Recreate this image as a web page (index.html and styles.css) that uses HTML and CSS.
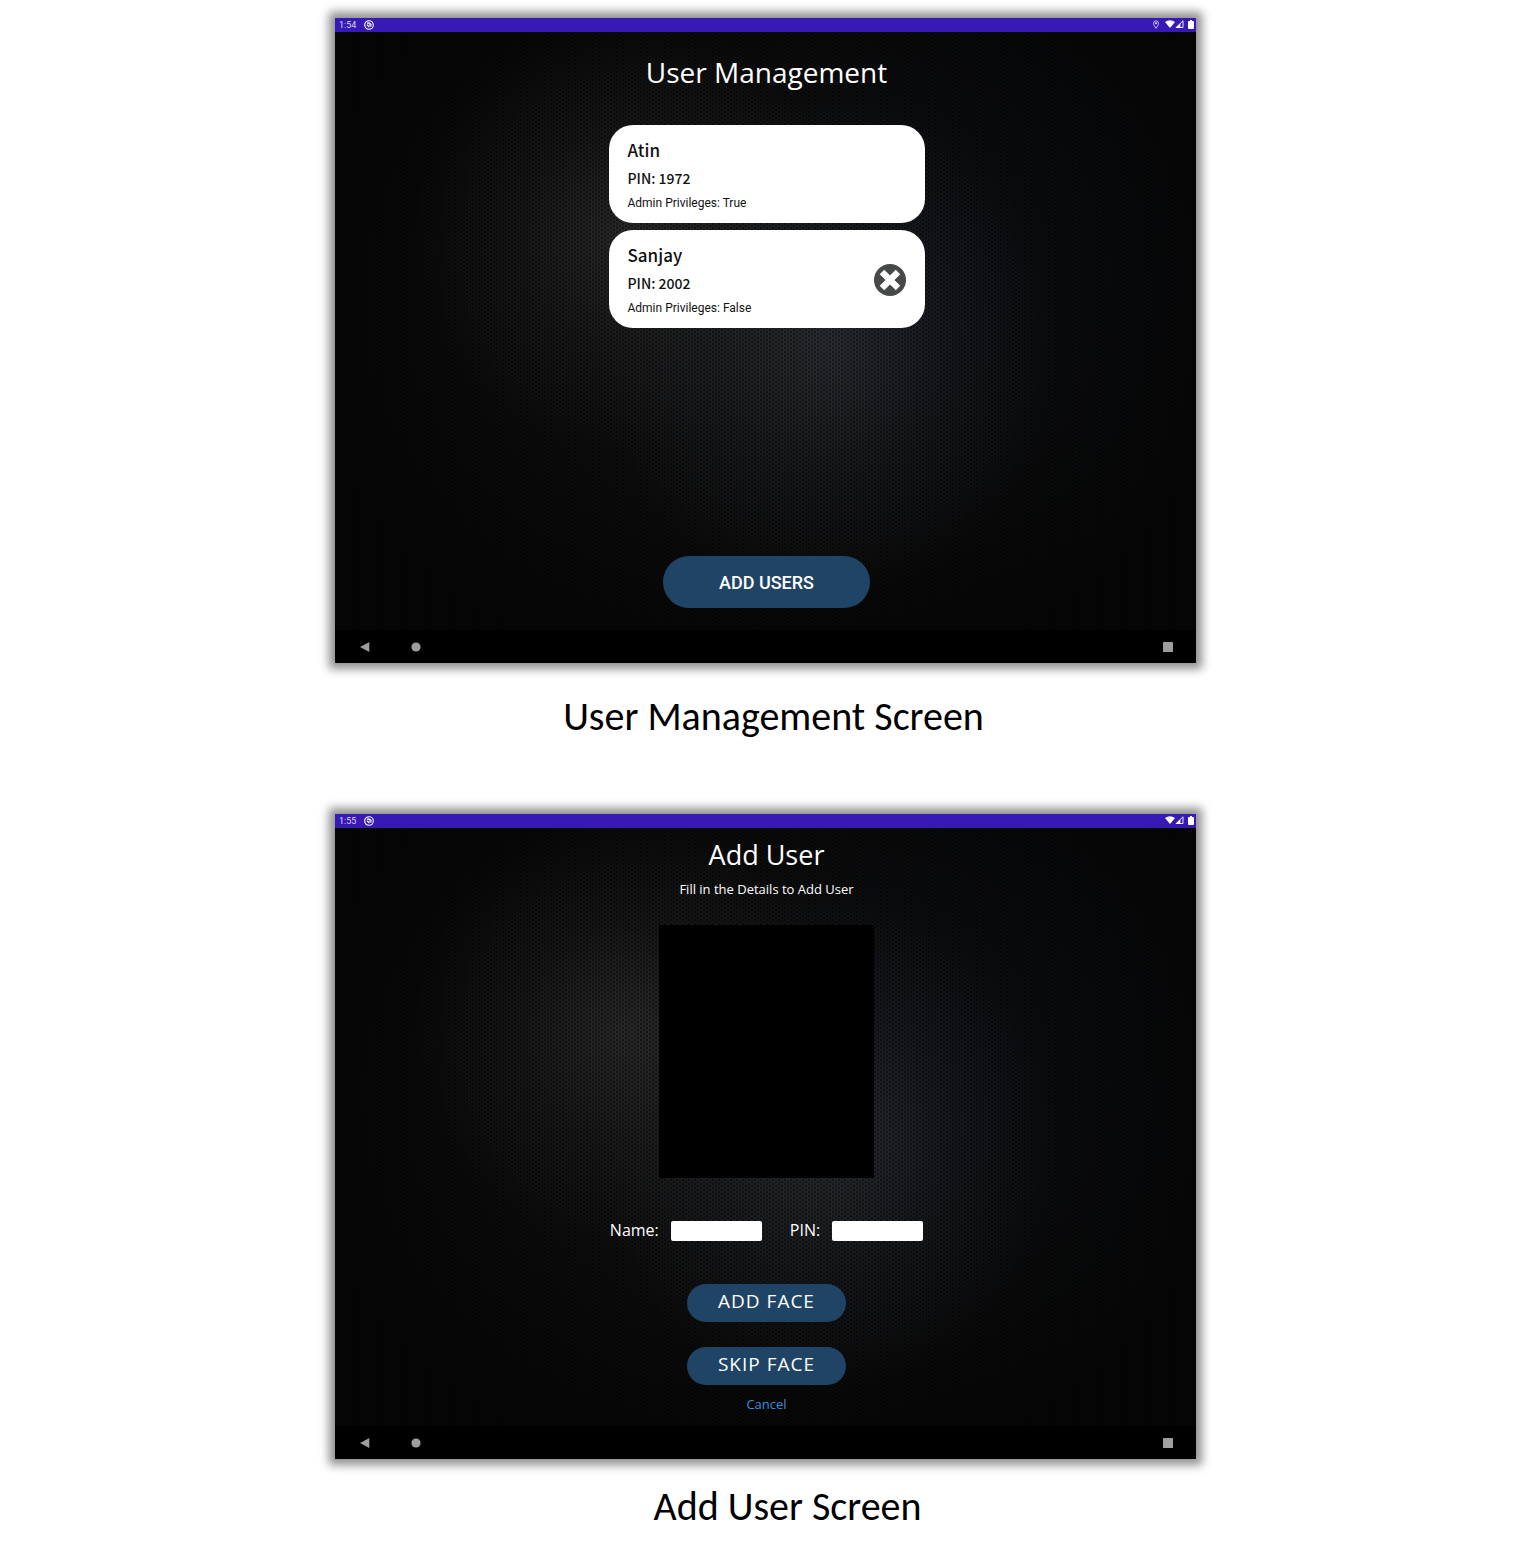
FILE: index.html
```html
<!DOCTYPE html>
<html lang="en">
<head>
<meta charset="utf-8">
<title>User Management</title>
<link rel="stylesheet" href="styles.css">
</head>
<body>
<svg class="sprite" aria-hidden="true">
  <symbol id="app" viewBox="0 0 10 10"><circle cx="5" cy="5" r="4.300" fill="none" stroke="#fff" stroke-width="1.100"/><path d="M3 3.200 5 2.800 7 4.200 6.800 6.800M2.800 4.600 5.400 7.200M4.800 4.800 6 5.200" fill="none" stroke="#fff" stroke-width="1.200"/></symbol>
  <symbol id="pin" viewBox="0 0 8 10"><path d="M4 9.200C2.400 7 1.300 5.400 1.300 3.600a2.700 2.700 0 0 1 5.400 0C6.700 5.400 5.600 7 4 9.200Z" fill="none" stroke="#fff" stroke-width=".8"/><circle cx="4" cy="3.600" r="1" fill="#fff"/></symbol>
  <symbol id="wifi" viewBox="0 0 10 8"><path d="M0 2Q5-1.500 10 2L5 8Z" fill="#fff"/></symbol>
  <symbol id="signal" viewBox="0 0 9 8"><path d="M1.200 7.500H8V.8Z" fill="none" stroke="#fff" stroke-width=".9"/><path d="M.4 8H5.400V3.200Z" fill="#fff"/></symbol>
  <symbol id="battery" viewBox="0 0 6 9"><path d="M2 0h2v1h1q1 0 1 1v6q0 1-1 1H1q-1 0-1-1V2q0-1 1-1h1Z" fill="#fff"/></symbol>
  <symbol id="back" viewBox="0 0 10 10"><path d="M9.300 0V10L0 5Z" fill="#9e9e9e"/></symbol>
  <symbol id="home" viewBox="0 0 10 10"><circle cx="5" cy="5" r="4.600" fill="#9e9e9e"/></symbol>
  <symbol id="recent" viewBox="0 0 10 10"><rect width="10" height="10" rx=".6" fill="#9e9e9e"/></symbol>
</svg>
<main class="page">
  <figure class="figure">
    <section class="screen">
      <header class="status">
        <span>1:54</span><svg class="i-app"><use href="#app"/></svg>
        <div class="status-icons"><svg class="i-pin"><use href="#pin"/></svg><svg class="i-wifi"><use href="#wifi"/></svg><svg class="i-signal"><use href="#signal"/></svg><svg class="i-battery"><use href="#battery"/></svg></div>
      </header>
      <div class="content manage">
        <h1 class="title">User Management</h1>
        <ul class="users">
          <li class="card">
            <div><h2 class="name">Atin</h2><p class="pin">PIN: 1972</p><p class="role">Admin Privileges: True</p></div>
          </li>
          <li class="card">
            <div><h2 class="name">Sanjay</h2><p class="pin">PIN: 2002</p><p class="role">Admin Privileges: False</p></div>
            <button class="remove" aria-label="Remove Sanjay"><svg viewBox="0 0 32 32"><circle cx="16" cy="16" r="16" fill="#474949"/><path d="m10 12 10 14 6-3-5-9Z" fill="#333535"/><path d="m8 8 16 16M24 8 8 24" stroke="#fff" stroke-width="6.400"/></svg></button>
          </li>
        </ul>
        <button class="add-users">ADD USERS</button>
      </div>
      <nav class="nav"><button aria-label="Back"><svg><use href="#back"/></svg></button><button aria-label="Home"><svg><use href="#home"/></svg></button><button aria-label="Recent apps"><svg><use href="#recent"/></svg></button></nav>
    </section>
    <figcaption class="caption caption-manage">User Management Screen</figcaption>
  </figure>
  <figure class="figure">
    <section class="screen">
      <header class="status">
        <span>1:55</span><svg class="i-app"><use href="#app"/></svg>
        <div class="status-icons"><svg class="i-wifi"><use href="#wifi"/></svg><svg class="i-signal"><use href="#signal"/></svg><svg class="i-battery"><use href="#battery"/></svg></div>
      </header>
      <form class="content add">
        <h1 class="title">Add User</h1>
        <p class="hint">Fill in the Details to Add User</p>
        <div class="camera"></div>
        <div class="fields">
          <label for="name">Name:</label><input id="name" type="text">
          <label for="pin-code">PIN:</label><input id="pin-code" type="text">
        </div>
        <button class="face" type="button">ADD FACE</button>
        <button class="face" type="button">SKIP FACE</button>
        <a class="cancel" href="#">Cancel</a>
      </form>
      <nav class="nav"><button aria-label="Back"><svg><use href="#back"/></svg></button><button aria-label="Home"><svg><use href="#home"/></svg></button><button aria-label="Recent apps"><svg><use href="#recent"/></svg></button></nav>
    </section>
    <figcaption class="caption caption-add">Add User Screen</figcaption>
  </figure>
</main>
</body>
</html>
```
FILE: styles.css
```css
* { box-sizing: border-box; }
body { margin: 0; background: #fff; font-family: "Open Sans", "Noto Sans", sans-serif; color: #000; }
h1, h2, p, ul, figure { margin: 0; padding: 0; font-weight: 400; }
button { border: 0; padding: 0; font: inherit; cursor: pointer; }
svg { display: block; }
.sprite { position: absolute; width: 0; height: 0; }

.page { display: flex; flex-direction: column; align-items: center; gap: 71px; padding: 18px 0 11px 7px; }
.figure { width: 100%; max-width: 861px; }
.screen { background: #000; box-shadow: 0 0 9px 6px #909090; }
.caption { margin-top: 28px; text-align: center; font: 40px/52px Carlito, Lato, sans-serif; }
.caption-manage { padding-left: 16px; }
.caption-add { margin-top: 22px; padding-left: 44px; }

.status { display: flex; align-items: center; height: 14px; padding: 0 2px 0 4px; background: #3719b4; color: #ddd6fa; font: 9px/14px Roboto, sans-serif; }
.i-app { width: 10px; height: 10px; margin-left: 8px; }
.status-icons { display: flex; align-items: center; height: 12px; margin: 0 0 2px auto; }
.i-pin { width: 8px; height: 9px; margin-right: 5px; }
.i-wifi { width: 10px; height: 8px; }
.i-signal { width: 9px; height: 8px; margin-right: 4px; }
.i-battery { width: 6px; height: 9px; }

.content {
  display: flex; flex-direction: column; align-items: center;
  padding-left: 2px; color: #fff;
  background:
    radial-gradient(ellipse 2px 2px, rgba(0,0,0,.6) 50%, transparent) 0 0 / 6px 4px,
    radial-gradient(ellipse 2px 2px, rgba(0,0,0,.6) 50%, transparent) 3px 2px / 6px 4px,
    radial-gradient(ellipse 25% 36% at 34% 34%, rgba(66,66,66,.7), rgba(58,58,58,.3) 50%, transparent),
    radial-gradient(ellipse 27% 42% at 57% 52%, rgba(66,69,76,.75), rgba(52,58,68,.35) 50%, transparent),
    radial-gradient(ellipse 32% 55% at 74% 38%, rgba(12,17,26,.6), transparent),
    radial-gradient(ellipse 55% 65% at 50% 45%, #1c1c1c, #0b0b0b 80%, #080808);
}
.title { font-size: 28px; line-height: 36px; }

.manage { padding-top: 22px; padding-bottom: 22px; }
.users { display: grid; gap: 7px; width: 316px; max-width: 100%; margin-top: 35px; list-style: none; }
.card { display: flex; align-items: center; justify-content: space-between; padding: 11px 19px 9px; border-radius: 24px; background: #fff; color: #111; }
.name { font: 500 17px/28px "Noto Sans CJK SC", sans-serif; }
.pin { font: 500 14px/29px "Noto Sans CJK SC", sans-serif; }
.role { font: 12px/21px Roboto, sans-serif; }
.remove { width: 32px; height: 32px; border-radius: 50%; background: none; }
.remove svg { width: 32px; height: 32px; }
.add-users { width: 207px; height: 52px; margin-top: 228px; padding-top: 2px; border-radius: 26px; background: #204465; color: #fff; font: 500 18px/24px Roboto, sans-serif; }

.add { padding-top: 9px; padding-bottom: 12px; }
.add .title { font-size: 27px; }
.hint { margin-top: 6px; font-size: 13px; line-height: 20px; }
.camera { width: 215px; height: 253px; margin-top: 26px; background: #000; }
.fields { display: flex; align-items: center; gap: 12px; margin-top: 43px; font-size: 16px; line-height: 18px; }
.fields label { padding-bottom: 2px; }
.fields input { width: 91px; height: 20px; padding: 0 4px; border: 0; border-radius: 2px; background: #fff; }
.fields input + label { margin-left: 16px; }
.face { width: 159px; height: 38px; margin-top: 43px; padding-bottom: 4px; border-radius: 19px; background: #204465; color: #fff; font-size: 19px; letter-spacing: 1px; }
.face + .face { margin-top: 25px; }
.cancel { margin-top: 9px; color: #3b8edb; font-size: 13px; line-height: 20px; text-decoration: none; }

.nav { display: flex; align-items: center; height: 33px; padding: 0 22px 0 24px; }
.nav button { display: grid; place-items: center; width: 12px; height: 12px; margin-right: 39px; background: none; }
.nav button:last-child { margin: 0 0 0 auto; }
.nav svg { width: 10px; height: 10px; }
```
